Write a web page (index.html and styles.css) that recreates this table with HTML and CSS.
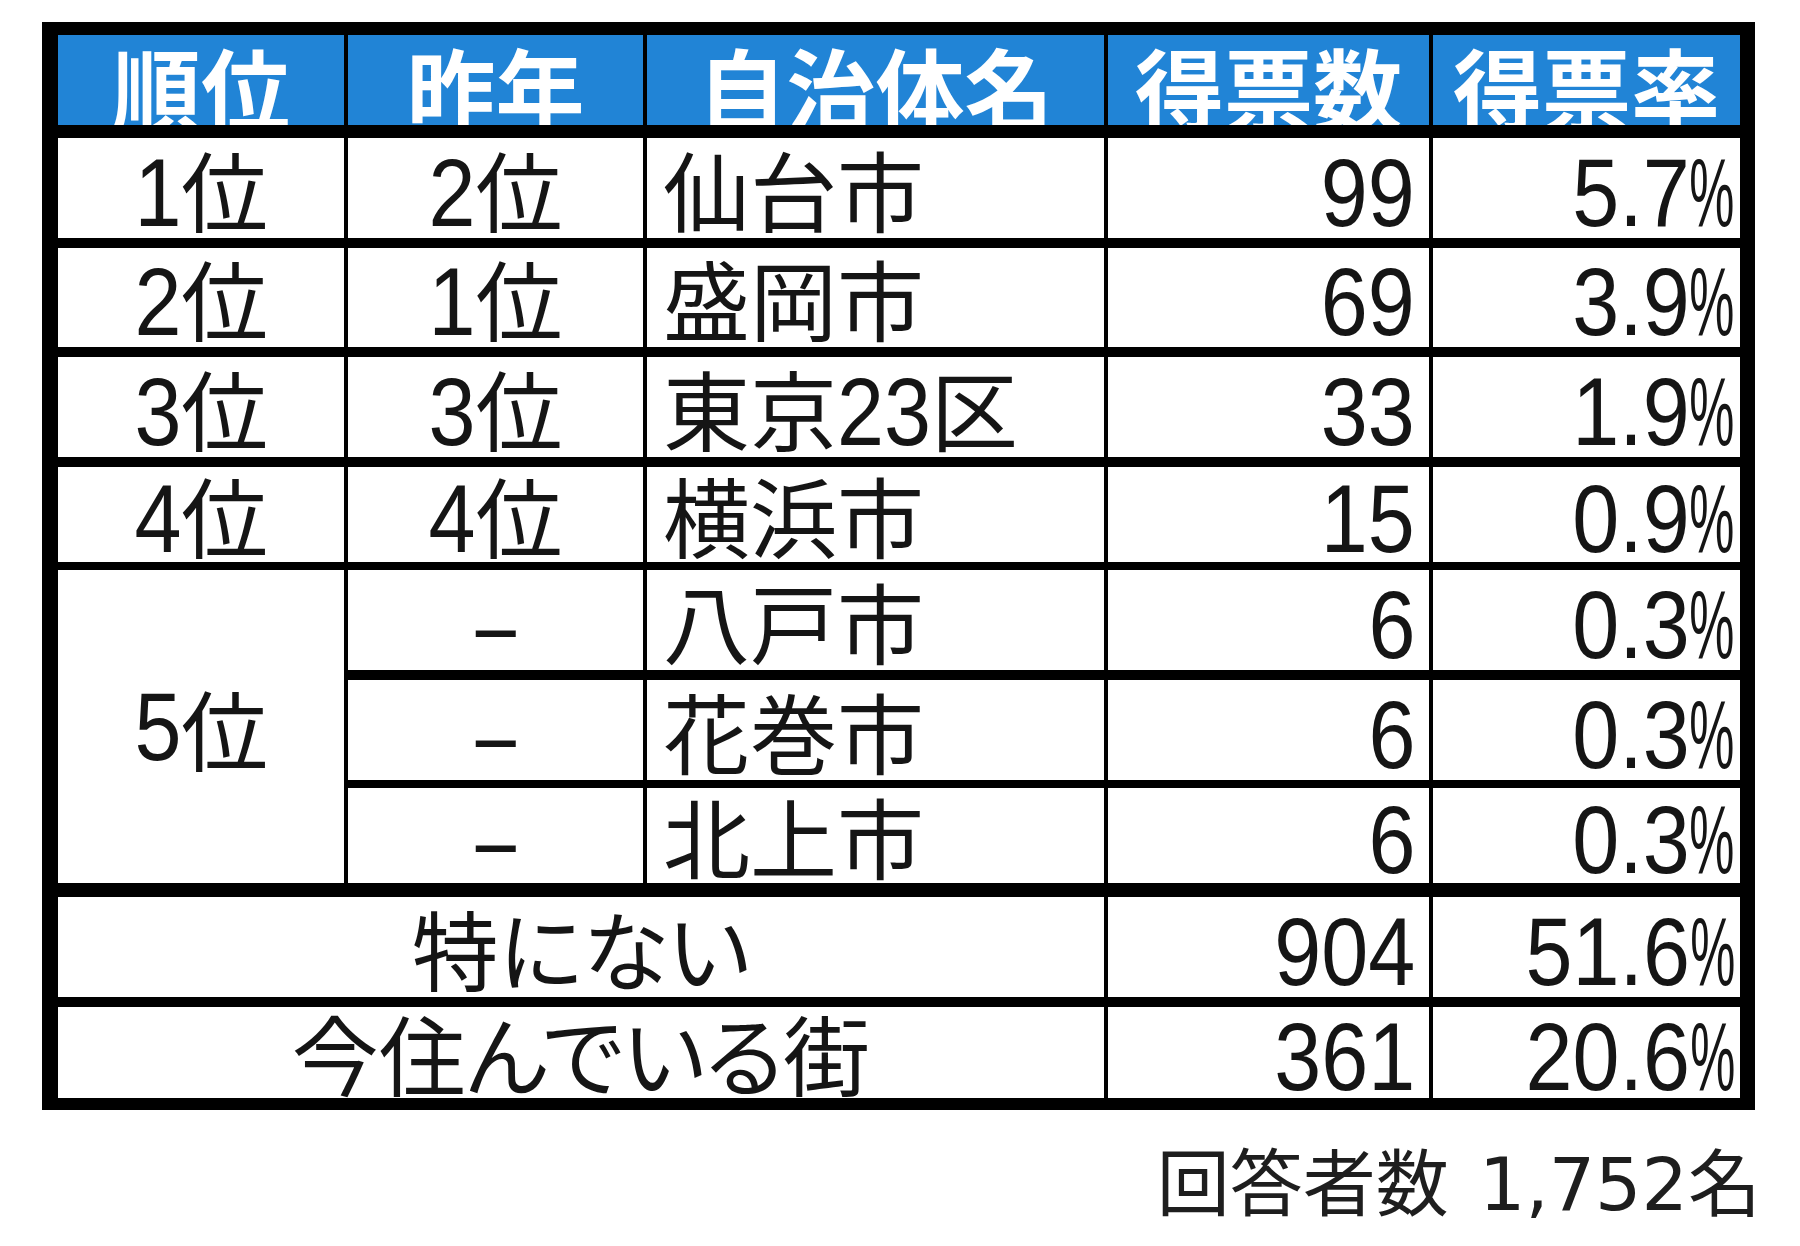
FILE: index.html
```html
<!DOCTYPE html>
<html lang="ja">
<head>
<meta charset="utf-8">
<title>住みたい自治体ランキング</title>
<link rel="stylesheet" href="styles.css">
</head>
<body>
<div class="page">
  <div class="board">
    <div class="row head">
      <div class="h">順位</div>
      <div class="h">昨年</div>
      <div class="h">自治体名</div>
      <div class="h">得票数</div>
      <div class="h">得票率</div>
    </div>
    <div class="row r1">
      <div class="c ctr"><span class="n lead">1</span>位</div>
      <div class="c ctr"><span class="n lead">2</span>位</div>
      <div class="c name">仙台市</div>
      <div class="c num"><span class="n">99</span></div>
      <div class="c num rate"><span class="n">5.7<span class="pct">%</span></span></div>
    </div>
    <div class="row r2">
      <div class="c ctr"><span class="n lead">2</span>位</div>
      <div class="c ctr"><span class="n lead">1</span>位</div>
      <div class="c name">盛岡市</div>
      <div class="c num"><span class="n">69</span></div>
      <div class="c num rate"><span class="n">3.9<span class="pct">%</span></span></div>
    </div>
    <div class="row r3">
      <div class="c ctr"><span class="n lead">3</span>位</div>
      <div class="c ctr"><span class="n lead">3</span>位</div>
      <div class="c name">東京<span class="n mid">23</span>区</div>
      <div class="c num"><span class="n">33</span></div>
      <div class="c num rate"><span class="n">1.9<span class="pct">%</span></span></div>
    </div>
    <div class="row r4">
      <div class="c ctr"><span class="n lead">4</span>位</div>
      <div class="c ctr"><span class="n lead">4</span>位</div>
      <div class="c name">横浜市</div>
      <div class="c num"><span class="n">15</span></div>
      <div class="c num rate"><span class="n">0.9<span class="pct">%</span></span></div>
    </div>
    <div class="row r5a">
      <div class="c ctr rank5"><span class="n lead">5</span>位</div>
      <div class="c ctr"><span class="n dash">–</span></div>
      <div class="c name">八戸市</div>
      <div class="c num"><span class="n">6</span></div>
      <div class="c num rate"><span class="n">0.3<span class="pct">%</span></span></div>
    </div>
    <div class="row r5b">
      <div class="c ctr"><span class="n dash">–</span></div>
      <div class="c name">花巻市</div>
      <div class="c num"><span class="n">6</span></div>
      <div class="c num rate"><span class="n">0.3<span class="pct">%</span></span></div>
    </div>
    <div class="row r5c">
      <div class="c ctr"><span class="n dash">–</span></div>
      <div class="c name">北上市</div>
      <div class="c num"><span class="n">6</span></div>
      <div class="c num rate"><span class="n">0.3<span class="pct">%</span></span></div>
    </div>
    <div class="row r6">
      <div class="c ctr wide">特にない</div>
      <div class="c num"><span class="n">904</span></div>
      <div class="c num rate"><span class="n">51.6<span class="pct">%</span></span></div>
    </div>
    <div class="row r7">
      <div class="c ctr wide">今住んでいる街</div>
      <div class="c num"><span class="n">361</span></div>
      <div class="c num rate"><span class="n">20.6<span class="pct">%</span></span></div>
    </div>
  </div>
  <div class="note">回答者数 <span class="fn">1,752</span>名</div>
</div>
</body>
</html>
```

FILE: styles.css
```css
html, body {
  margin: 0;
  padding: 0;
  background: #ffffff;
}

.page {
  width: 1713px;
  padding: 22px 0 0 42px;
}

.board {
  display: grid;
  grid-template-columns: 286px 295px 457px 321px 307px;
  grid-template-rows: 90px 13px 100px 10px 99px 10px 100px 10px 95px 8px 100px 10px 100px 8px 95px 14px 100px 10px 91px;
  column-gap: 4px;
  row-gap: 0;
  background: #000;
  padding: 13px 15px 12px 16px;
}

.row { display: contents; }

.head > * { grid-row: 1; }
.r1 { line-height: 100px; }
.r1 > * { grid-row: 3; }
.r2 { line-height: 99px; }
.r2 > * { grid-row: 5; }
.r3 { line-height: 100px; }
.r3 > * { grid-row: 7; }
.r4 { line-height: 95px; }
.r4 > * { grid-row: 9; }
.r5a { line-height: 100px; }
.r5a > * { grid-row: 11; }
.r5a > .rank5 {
  grid-row: 11 / span 5;
  display: flex;
  align-items: center;
  justify-content: center;
  line-height: 94px;
}
.r5b { line-height: 100px; }
.r5b > * { grid-row: 13; }
.r5c { line-height: 95px; }
.r5c > * { grid-row: 15; }
.r6 { line-height: 100px; }
.r6 > * { grid-row: 17; }
.r7 { line-height: 91px; }
.r7 > * { grid-row: 19; }

.wide {
  grid-column: span 3;
  font-feature-settings: "palt" 1;
}

.h {
  background: #2184d6;
  color: #ffffff;
  font-family: "Noto Sans CJK JP", sans-serif;
  font-weight: 700;
  font-size: 89px;
  line-height: 90px;
  text-align: center;
  padding-top: 6px;
  overflow: hidden;
  white-space: nowrap;
}

.c {
  background: #ffffff;
  color: #151515;
  font-family: "Noto Sans CJK JP", sans-serif;
  font-size: 87px;
  white-space: nowrap;
  overflow: hidden;
}

.ctr { text-align: center; }
.name { padding-left: 16px; }
.num { text-align: right; padding-right: 14px; }
.num.rate { padding-right: 5px; }

.n {
  display: inline-block;
  font-family: "Liberation Sans", "Arimo", sans-serif;
  font-size: 96px;
  line-height: 0;
  transform: scaleX(0.88);
  transform-origin: right center;
}

.n.lead {
  margin-left: -0.067em;
}

.n.mid {
  transform-origin: left center;
  margin-right: -0.134em;
}

.n.dash {
  transform: scaleX(0.75);
  transform-origin: center center;
}

.pct {
  display: inline-block;
  transform: scaleX(0.6);
  transform-origin: right center;
  margin-left: -34px;
}

.note {
  margin-top: 28px;
  margin-right: -6px;
  text-align: right;
  font-family: "Noto Sans CJK JP", sans-serif;
  font-size: 73px;
  line-height: 80px;
  color: #1e1e1e;
  word-spacing: 14px;
  white-space: nowrap;
}

.fn {
  font-family: "DejaVu Sans", sans-serif;
  letter-spacing: 0;
  word-spacing: 0;
}
```
